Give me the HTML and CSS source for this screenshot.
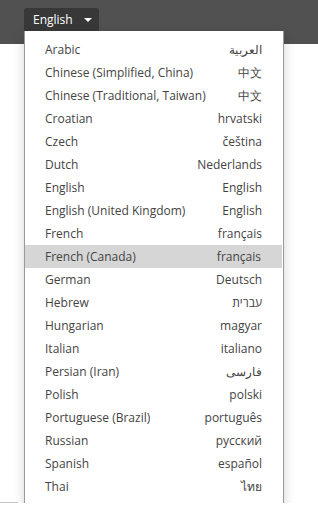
FILE: index.html
```html
<!DOCTYPE html>
<html lang="en">
<head>
  <meta charset="UTF-8" />
  <meta name="viewport" content="width=device-width, initial-scale=1" />
  <title>Language</title>
  <link rel="stylesheet" href="styles.css">
</head>
<body>

  <div class="topbar">
    <div class="lang-picker">
      <button class="lang-btn">English <span class="caret"></span></button>
      <ul class="lang-menu">
        <li><span>Arabic</span><span lang="ar">العربية</span></li>
        <li><span>Chinese (Simplified, China)</span><span lang="zh">中文</span></li>
        <li><span>Chinese (Traditional, Taiwan)</span><span lang="zh">中文</span></li>
        <li><span>Croatian</span><span>hrvatski</span></li>
        <li><span>Czech</span><span>čeština</span></li>
        <li><span>Dutch</span><span>Nederlands</span></li>
        <li><span>English</span><span>English</span></li>
        <li><span>English (United Kingdom)</span><span>English</span></li>
        <li><span>French</span><span>français</span></li>
        <li class="active"><span>French (Canada)</span><span>français</span></li>
        <li><span>German</span><span>Deutsch</span></li>
        <li><span>Hebrew</span><span lang="he">עברית</span></li>
        <li><span>Hungarian</span><span>magyar</span></li>
        <li><span>Italian</span><span>italiano</span></li>
        <li><span>Persian (Iran)</span><span lang="fa">فارسی</span></li>
        <li><span>Polish</span><span>polski</span></li>
        <li><span>Portuguese (Brazil)</span><span>português</span></li>
        <li><span>Russian</span><span>русский</span></li>
        <li><span>Spanish</span><span>español</span></li>
        <li><span>Thai</span><span lang="th">ไทย</span></li>
      </ul>
    </div>
  </div>

  <div class="content"></div>

</body>
</html>
```

FILE: styles.css
```css
body {
  margin: 0;
  font-family: "Open Sans", "Noto Sans", sans-serif;
  background: #fff;
}
.topbar {
  display: flex;
  align-items: flex-start;
  height: 44px;
  background: #515151;
  padding: 8px 0 0 24px;
  box-sizing: border-box;
}
.lang-picker {
  position: relative;
}
.lang-btn {
  display: flex;
  align-items: center;
  gap: 11px;
  height: 23px;
  padding: 0 9px;
  width: 75px;
  border: 0;
  border-radius: 3px 3px 0 0;
  background: #383838;
  color: #fff;
  font-family: inherit;
  font-size: 12px;
}
.caret {
  width: 0;
  height: 0;
  border-left: 4px solid transparent;
  border-right: 4px solid transparent;
  border-top: 4px solid #fff;
}
.lang-menu {
  position: absolute;
  top: 23px;
  left: 0;
  width: 260px;
  margin: 0;
  padding: 7px 0;
  list-style: none;
  background: #fff;
  border: 1px solid #9a9a9a;
  border-top: 0;
  border-radius: 0 0 3px 3px;
  box-shadow: 0 4px 12px rgba(0, 0, 0, 0.18);
  box-sizing: border-box;
  z-index: 2;
}
.lang-menu li {
  display: flex;
  justify-content: space-between;
  align-items: center;
  height: 23px;
  padding: 0 21px 0 20px;
  font-size: 12px;
  color: #444;
}
.lang-menu li.active {
  background: #d6d6d6;
  margin-right: 1px;
}
.content {
  height: 458px;
  border-bottom: 1px solid #c4c4c4;
  margin-right: 300px;
}
```
